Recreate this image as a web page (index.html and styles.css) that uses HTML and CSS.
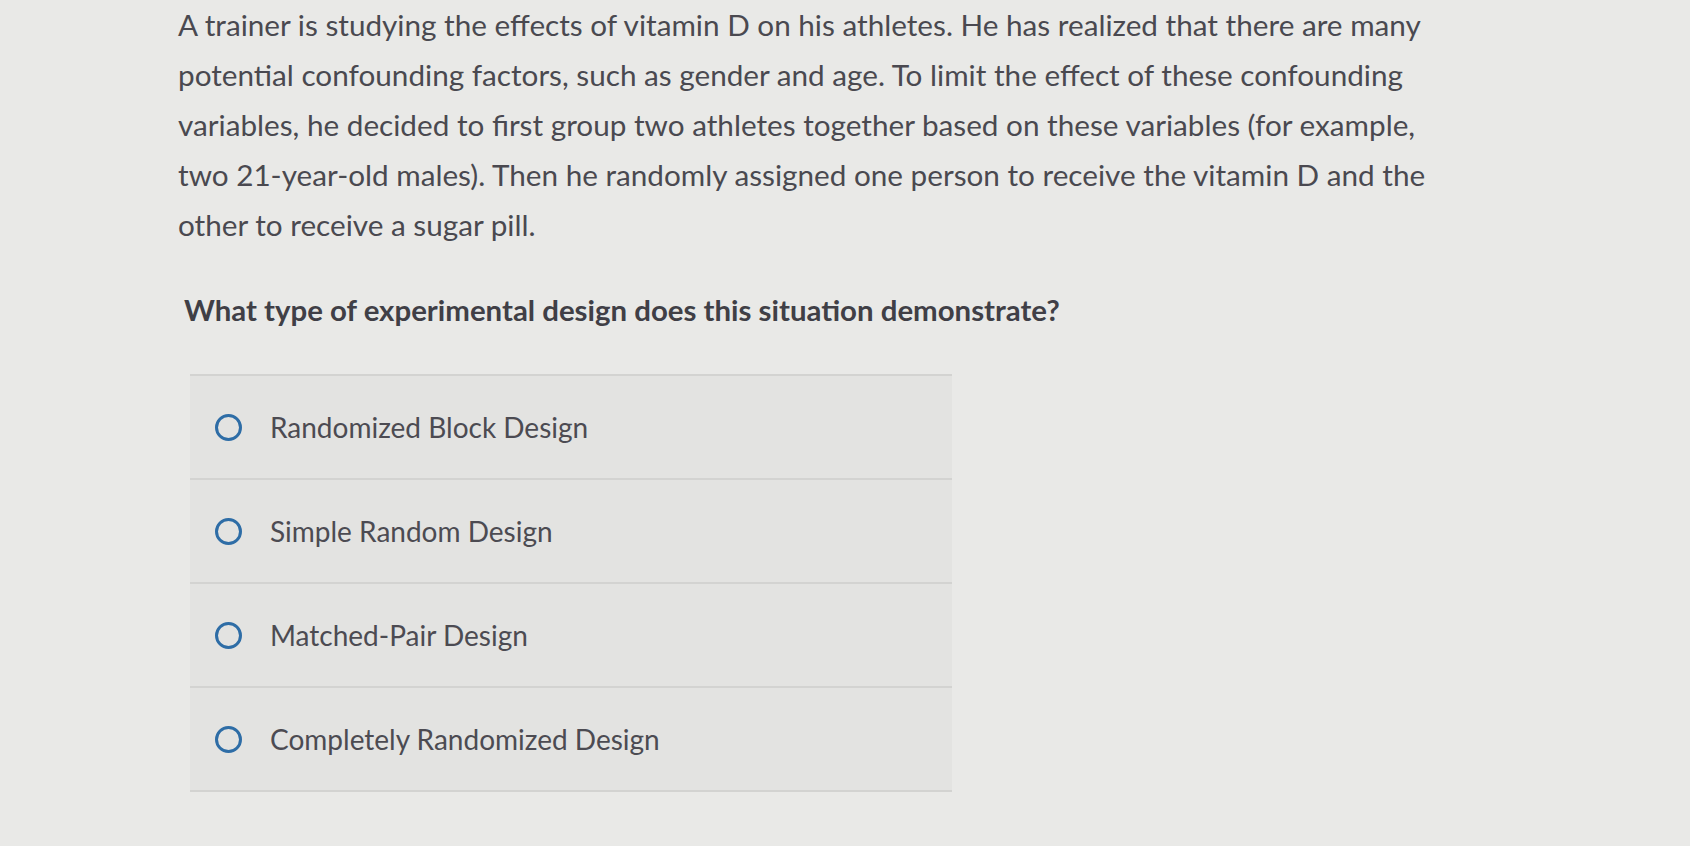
FILE: index.html
```html
<!DOCTYPE html>
<html lang="en">
<head>
<meta charset="utf-8">
<title>Question</title>
<link rel="stylesheet" href="styles.css">
</head>
<body>
<main class="question">
  <p class="prompt">A trainer is studying the effects of vitamin D on his athletes. He has realized that there are many<br>
  potential confounding factors, such as gender and age. To limit the effect of these confounding<br>
  variables, he decided to first group two athletes together based on these variables (for example,<br>
  two 21-year-old males). Then he randomly assigned one person to receive the vitamin D and the<br>
  other to receive a sugar pill.</p>
  <p class="ask">What type of experimental design does this situation demonstrate?</p>
  <ul class="choices">
    <li class="choice"><span class="radio"></span><span class="label">Randomized Block Design</span></li>
    <li class="choice"><span class="radio"></span><span class="label">Simple Random Design</span></li>
    <li class="choice"><span class="radio"></span><span class="label">Matched-Pair Design</span></li>
    <li class="choice"><span class="radio"></span><span class="label">Completely Randomized Design</span></li>
  </ul>
</main>
</body>
</html>
```
FILE: styles.css
```css
html, body {
  margin: 0;
  padding: 0;
}
body {
  background: #e9e9e7;
  color: #4a4950;
  font-family: Lato, "Open Sans", "Liberation Sans", sans-serif;
  width: 1690px;
  height: 846px;
  overflow: hidden;
}
.question {
  padding: 0 0 0 178px;
}
.prompt {
  margin: 0;
  width: 1400px;
  font-size: 29.7px;
  line-height: 50px;
  white-space: nowrap;
}
.ask {
  margin: 35px 0 0 6px;
  font-size: 29.4px;
  line-height: 50px;
  font-weight: 700;
  color: #403f46;
}
.choices {
  list-style: none;
  margin: 39px 0 0 12px;
  padding: 0;
  width: 762px;
  border-top: 2px solid #d3d3d1;
}
.choice {
  display: flex;
  align-items: center;
  height: 102px;
  padding-left: 25px;
  background: #e3e3e1;
  border-bottom: 2px solid #d3d3d1;
}
.radio {
  width: 21px;
  height: 21px;
  border: 3px solid #2e6da6;
  border-radius: 50%;
  flex: none;
}
.label {
  margin-left: 28px;
  font-size: 28px;
  color: #4c4b52;
}
```
